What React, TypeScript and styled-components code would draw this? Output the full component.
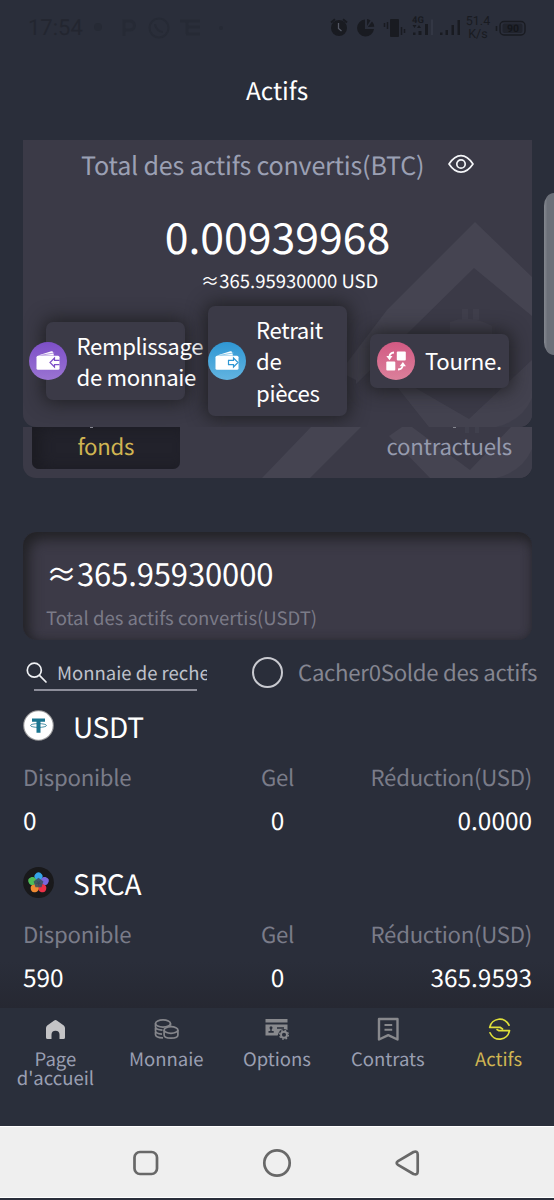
import React from "react";
import styled, { createGlobalStyle } from "styled-components";

const GlobalStyle = createGlobalStyle`
  * { box-sizing: border-box; }
  body {
    margin: 0;
    background: #2a2e3a;
    font-family: "Noto Sans CJK SC", "Noto Sans", sans-serif;
    text-rendering: geometricPrecision;
    color: #fff;
  }
`;

const Page = styled.div`
  position: relative;
  width: 554px;
  height: 1200px;
  overflow: hidden;
  display: flex;
  flex-direction: column;
  background: #2a2e3a;
`;

const StatusBar = styled.div`
  height: 56px;
  flex: none;
  display: flex;
  justify-content: space-between;
  padding: 0 28px 0 28px;
  font-family: Roboto, sans-serif;
  color: #191b21;
`;

const StatusLeft = styled.div`
  display: flex;
  align-items: center;
  color: #232630;
  font-size: 22px;
`;

const Clock = styled.span`
  width: 60px;
`;

const StatusRight = styled.div`
  display: flex;
  align-items: center;
`;

const NetSpeed = styled.div`
  width: 28px;
  margin: 1px 3px 0 2px;
  font-size: 12.5px;
  line-height: 12.5px;
  text-align: center;
`;

const Header = styled.header`
  height: 84px;
  flex: none;
  font-size: 24.4px;
  line-height: 69px;
  text-align: center;
`;

const AssetCard = styled.section`
  position: relative;
  width: 509px;
  height: 287px;
  flex: none;
  margin-left: 23px;
  background: #3b3a47;
  border-radius: 0 0 13px 13px;
  overflow: hidden;
`;

const Backdrop = styled.svg`
  position: absolute;
  right: 0;
  bottom: 0;
`;

const CardTitle = styled.div`
  position: relative;
  display: flex;
  align-items: center;
  height: 47px;
  padding-left: 58px;
  gap: 24px;
  font-size: 25.1px;
  letter-spacing: -0.2px;
  color: #9ba0b4;
  white-space: nowrap;
`;

const CardTitleText = styled.span`
  line-height: 47px;
  padding-top: 4px;
`;

const BtcTotal = styled.div`
  position: relative;
  margin-top: 19px;
  font-size: 42.8px;
  line-height: 60px;
  text-align: center;
`;

const UsdTotal = styled.div`
  position: relative;
  margin-top: 1px;
  padding-left: 24px;
  font-size: 18.5px;
  line-height: 28px;
  text-align: center;
`;

const Actions = styled.div`
  position: relative;
  display: flex;
  align-items: center;
  gap: 23px;
  height: 110px;
  margin-top: 11px;
  padding-left: 23px;
`;

const Action = styled.button`
  display: flex;
  flex: none;
  align-items: center;
  justify-content: center;
  gap: 10px;
  width: 139px;
  padding: 8px 0;
  border: 0;
  border-radius: 7px;
  background: #3b3a47;
  box-shadow: 0 0 18px 3px rgba(28, 28, 30, 0.85);
  color: #fff;
  font: inherit;
`;

const ActionLabel = styled.span<{ $width: number }>`
  flex: none;
  width: ${(p) => p.$width}px;
  font-size: 22.2px;
  letter-spacing: -0.35px;
  line-height: 31.2px;
  text-align: left;
  white-space: pre;
`;

const ActionIcon = styled.svg`
  flex: none;
  display: block;
`;

const Tabs = styled.div`
  position: relative;
  display: flex;
  justify-content: space-between;
  width: 509px;
  height: 51px;
  flex: none;
  margin-left: 23px;
  padding: 0 9px;
  background: #3b3a47;
  border-radius: 0 0 13px 13px;
  overflow: hidden;
`;

const Tab = styled.div<{ $active?: boolean }>`
  position: relative;
  width: 147.5px;
  height: 41.5px;
  border-radius: 0 0 7px 7px;
  font-size: 22.2px;
  letter-spacing: -0.27px;
  line-height: 38px;
  text-align: center;
  color: ${(p) => (p.$active ? "#d0b552" : "#969bae")};
  background: ${(p) => (p.$active ? "#22222b" : "transparent")};
  box-shadow: ${(p) => (p.$active ? "inset 8px 0 14px rgba(26, 26, 32, 0.8)" : "none")};
`;

const BalanceCard = styled.section`
  width: 509px;
  height: 108px;
  flex: none;
  margin: 54px 0 0 23px;
  padding: 15px 0 0 23px;
  border-radius: 14px;
  background: #3c3a47;
  box-shadow: inset 5px 6px 13px 1px #222226, inset -2px -1px 6px rgba(46, 46, 56, 0.6);
`;

const BalanceValue = styled.div`
  font-size: 31px;
  letter-spacing: -0.12px;
  line-height: 51px;
`;

const BalanceLabel = styled.div`
  margin-top: 5px;
  font-size: 18.5px;
  line-height: 30px;
  color: #7b7b88;
`;

const Filters = styled.div`
  display: flex;
  height: 60px;
  flex: none;
  padding-left: 26px;
  white-space: nowrap;
`;

const Search = styled.div`
  width: 181px;
`;

const SearchRow = styled.div`
  display: flex;
  align-items: center;
  height: 49px;
  padding-top: 16px;
  gap: 9px;
`;

const SearchText = styled.div`
  width: 150px;
  overflow: hidden;
  font-size: 18.5px;
  line-height: 30px;
  margin-top: 1px;
  color: #bfc2cc;
`;

const Underline = styled.div`
  width: 163px;
  height: 2px;
  margin-left: 8px;
  background: #8d8e9a;
`;

const HideToggle = styled.div`
  display: flex;
  align-items: center;
  height: 64px;
  margin-left: 45px;
  gap: 15px;
  color: #858691;
`;

const Radio = styled.span`
  width: 31px;
  height: 31px;
  border: 2px solid #c9cad0;
  border-radius: 50%;
`;

const HideLabel = styled.span`
  font-size: 22.2px;
  letter-spacing: -0.28px;
  line-height: 30px;
`;

const AssetList = styled.main`
  height: 308px;
  flex: none;
  overflow: hidden;
  padding: 0 22px 0 23px;
  background: linear-gradient(#2a2e3a 85%, #262832);
`;

const Asset = styled.article`
  height: 157px;
`;

const AssetHead = styled.div`
  display: flex;
  align-items: center;
  height: 51px;
  gap: 19px;
  font-size: 28px;
  letter-spacing: -0.3px;
`;

const AssetName = styled.span`
  line-height: 48px;
  margin-top: 2px;
`;

const Columns = styled.div<{ $kind: "label" | "value" }>`
  display: grid;
  grid-template-columns: 1fr 1fr 1fr;
  font-size: ${(p) => (p.$kind === "label" ? 22.2 : 24.4)}px;
  letter-spacing: ${(p) => (p.$kind === "label" ? -0.26 : 0)}px;
  line-height: ${(p) => (p.$kind === "label" ? 53 : 33)}px;
  color: ${(p) => (p.$kind === "label" ? "#7a7c89" : "#fff")};
  white-space: nowrap;
  & > :nth-child(2) { text-align: center; }
  & > :nth-child(3) { text-align: right; }
`;

const BottomNav = styled.nav`
  display: grid;
  grid-template-columns: repeat(5, 1fr);
  height: 118px;
  flex: none;
  background: #2a2f3b;
`;

const NavItem = styled.div<{ $active?: boolean }>`
  display: flex;
  flex-direction: column;
  align-items: center;
  padding-top: 8px;
  font-size: 18.5px;
  line-height: 18.5px;
  text-align: center;
  white-space: pre;
  color: ${(p) => (p.$active ? "#d0b552" : "#9a9fb2")};
`;

const NavIcon = styled.svg`
  display: block;
  margin-bottom: 7px;
`;

const SystemBar = styled.div`
  height: 72px;
  flex: none;
  border-top: 1px solid #fff;
  background: #efefef;
  border-bottom: 1px solid #fff;
  display: flex;
  justify-content: center;
`;

const EdgeHandle = styled.div`
  position: absolute;
  right: 0;
  top: 193px;
  width: 10px;
  height: 162px;
  border-radius: 14px 0 0 14px / 18px 0 0 18px;
  background: linear-gradient(90deg, #858890, #6c7079 35%);
`;

const TabRemnant = styled.i<{ $left: number }>`
  position: absolute;
  left: ${(p) => p.$left}px;
  top: 0;
  width: 3px;
  height: 1px;
  background: #85868f;
`;

const LeftStatusIcons = () => (
  <svg width="140" height="24" viewBox="88 16 140 24" fill="none" stroke="#262a35" strokeWidth="2">
    <circle cx="98" cy="27" r="4" fill="#262a35" stroke="none" />
    <path d="M124 36V21h6a4.500 4.500 0 0 1 0 9h-6" strokeWidth="3" />
    <circle cx="159" cy="28" r="9.500" />
    <path d="M155 24c0 4 4 8 8 8" />
    <path d="M180 21h20M186 27h14M186 34h14M187 21v13" strokeWidth="3" />
    <circle cx="221" cy="28" r="2" fill="#262a35" stroke="none" />
  </svg>
);

const RightStatusIcons = () => (
  <svg width="134" height="28" viewBox="328 14 134 28" fill="#191b21">
    <circle cx="339" cy="28" r="8" />
    <path d="M331 22.500l4-3.300M347 22.500l-4-3.300" stroke="#191b21" strokeWidth="2" />
    <path d="M338.500 23v5.500l3 2.500" stroke="#555965" strokeWidth="1.300" fill="none" />
    <path d="M365 19.500a8.500 8.500 0 1 0 9 9.500h-9z" />
    <path d="M367 19a8 8 0 0 1 3.500 1.500L367 26zM372 21.500a8 8 0 0 1 2.300 5.200l-6.500.3z" />
    <rect x="390" y="19" width="9" height="18" rx="1" />
    <path d="M384.500 23v4M387.500 22v7M401.500 27v8M404.500 29v4" stroke="#191b21" strokeWidth="1.500" />
    <text x="412" y="23" fontSize="9.500" fontWeight="700" fontFamily="Roboto">4G</text>
    <path d="M412.500 25h4l-2 3zM417 28l2-3 2 3z" />
    <path d="M413 32.500h2.500V35H413zM418.500 31h3v4h-3zM425 24h3v11h-3z" />
    <path d="M431 19.500h2V35h-2z" fill="#333744" />
    <path d="M440 32.500h2.500V35H440zM445.500 30h2.500v5h-2.500zM451.500 25h2.500v10h-2.500zM457.500 20h2.500v15h-2.500z" />
  </svg>
);

const Battery = () => (
  <svg width="31" height="20" viewBox="495 17 31 20">
    <rect x="500" y="20.500" width="25" height="13.500" rx="4" fill="none" stroke="#191b21" strokeWidth="1.400" />
    <rect x="502.500" y="22.500" width="20" height="9.500" rx="2" fill="#20232c" />
    <path d="M496.500 25v5" stroke="#191b21" strokeWidth="1.600" />
    <text x="513" y="31.300" fontSize="10.500" fontWeight="700" textAnchor="middle" fontFamily="Roboto" fill="#14161b">90</text>
  </svg>
);

const Eye = () => (
  <svg width="26" height="20" viewBox="0 0 26 20" fill="none" stroke="#f4f5f8" strokeWidth="1.700">
    <path d="M1 10C5 4 9 1.600 13 1.600S21 4 25 10c-4 6-8 8.200-12 8.200S5 16 1 10z" strokeLinejoin="round" />
    <circle cx="13" cy="10" r="4.200" />
  </svg>
);

const Wallet = ({ id, from, to, out }: { id: string; from: string; to: string; out?: boolean }) => (
  <ActionIcon width="38" height="38" viewBox="0 0 38 38">
    <defs>
      <linearGradient id={id} x1="0" y1="0" x2="0" y2="1">
        <stop offset="0" stopColor={from} />
        <stop offset="1" stopColor={to} />
      </linearGradient>
    </defs>
    <circle cx="19" cy="19" r="19" fill={`url(#${id})`} />
    <path d="M9 13.500L22.300 9.200q1.500-.3 2 1.200l.6 3.100z" fill="#fff" />
    <path d="M12.500 13.200l13.500-2.400" stroke={to} strokeWidth=".7" />
    <rect x="7.500" y="13.800" width="23" height="14" rx="1.500" fill="#fff" />
    {out ? (
      <path d="M20.500 18.300h5v-2.300l4.500 4.500-4.500 4.500v-2.300h-5z" fill="none" stroke={from} strokeWidth="1.200" />
    ) : (
      <path d="M30.500 18.300h-5v-2.300L21 20.500l4.500 4.500v-2.300h5" fill="none" stroke={from} strokeWidth="1.200" />
    )}
  </ActionIcon>
);

const Swap = () => (
  <ActionIcon width="38" height="38" viewBox="0 0 38 38">
    <defs>
      <linearGradient id="swap" x1="0" y1="0" x2="0" y2="1">
        <stop offset="0" stopColor="#d25a83" />
        <stop offset="1" stopColor="#db809b" />
      </linearGradient>
    </defs>
    <circle cx="19" cy="19" r="19" fill="url(#swap)" />
    <rect x="19.800" y="9.600" width="9" height="9" rx="1" fill="#fff" />
    <rect x="9.300" y="19.600" width="9" height="9" rx="1" fill="#fff" />
    <path d="M17 10.500q-4.300.2-4.600 4.500" fill="none" stroke="#fff" strokeWidth="1.800" />
    <path d="M9.300 14h6.200l-3 4.200z" fill="#fff" />
    <path d="M21 27.500q4.500-.2 4.800-4.500" fill="none" stroke="#fff" strokeWidth="1.800" />
    <path d="M22.700 24.300h6.200l-3-4.300z" fill="#fff" />
  </ActionIcon>
);

const CardBackdrop = () => (
  <Backdrop width="300" height="287" viewBox="232 140 300 287">
    <g fill="#454451">
      <path d="M475 222L532 277V316L474 268L356 384V380L340 372L387 310z" />
      <path d="M398 388L412 386L469 419L532 360V427H429z" opacity=".85" />
    </g>
    <path d="M462 309h6v11h-6zM473 309h6v11h-6zM450 322q20-8 42 4v12h-42z" fill="#454451" opacity=".55" />
    <path d="M532 398v29h-36q26-6 36-29z" fill="#3b3a47" opacity=".6" />
  </Backdrop>
);

const TabsBackdrop = () => (
  <Backdrop width="300" height="51" viewBox="232 427 300 51">
    <path d="M311 427H361L310 478H262zM389 436L402 427H412L470 470L511 427H532V478H430z" fill="#454451" />
    <path d="M465 427h4v6h-4zM475 427h4v6h-4z" fill="#454451" opacity=".6" />
    <path d="M532 449v29h-36q26-6 36-29z" fill="#3b3a47" opacity=".6" />
  </Backdrop>
);

const SearchIcon = () => (
  <svg width="22" height="22" viewBox="0 0 22 22" fill="none" stroke="#f0f1f4" strokeWidth="1.700" strokeLinecap="round">
    <circle cx="8.300" cy="8.200" r="7" />
    <path d="M13.500 13.300l6.500 6.700" />
  </svg>
);

const Tether = () => (
  <svg width="31" height="31" viewBox="0 0 31 31">
    <circle cx="15.500" cy="15.500" r="15.300" fill="#9b9b9d" />
    <circle cx="15.500" cy="15.500" r="14.200" fill="#fff" />
    <path d="M9 8.500h13v3.300h-4.500v11h-4v-11H9z" fill="#1a7590" />
    <ellipse cx="15.500" cy="15.500" rx="8" ry="1.900" fill="none" stroke="#1a7590" strokeWidth=".8" />
  </svg>
);

const petals = ["#35a5ea", "#7a68dc", "#ed3148", "#f08b33", "#4fbd58"];

const Srca = () => (
  <svg width="31" height="31" viewBox="0 0 31 31">
    <circle cx="15.500" cy="15.500" r="15.400" fill="#19191b" />
    {petals.map((color, i) => (
      <path
        key={color}
        d="M15.500 15C11 11.500 10.700 9.500 12 7.500q3.500-4.600 7 0C20.300 9.500 20 11.500 15.500 15z"
        fill={color}
        transform={`rotate(${i * 72} 15.500 16)`}
      />
    ))}
    <path d="M15.500 10.800l4.900 3.600-1.900 5.800h-6l-1.900-5.800z" fill="#3f5260" opacity=".9" />
  </svg>
);

const HomeIcon = () => (
  <NavIcon width="27" height="27" viewBox="0 0 27 27">
    <path d="M12.200 4.400q1.300-.9 2.600 0l7 5.200q1.200 1 1.200 2.500v9.300q0 1.600-1.600 1.600h-3.900v-4.200a4 4 0 0 0-8 0V23H5.600Q4 23 4 21.400v-9.300q0-1.500 1.200-2.500z" fill="#c4c4c6" />
  </NavIcon>
);

const CoinsIcon = () => (
  <NavIcon width="27" height="27" viewBox="0 0 27 27" fill="none" stroke="#85868b" strokeWidth="1.700">
    <ellipse cx="10" cy="7.500" rx="7.500" ry="3.600" />
    <path d="M2.500 7.500v3.300c0 1.900 3 3.200 7 3.400M17.500 7.500v2.300M2.500 11.800v3c0 1.800 2.500 3 6.500 3.300M2.500 15.800v2.700c0 1.900 3 3.300 7.500 3.300" />
    <ellipse cx="18" cy="14" rx="6.900" ry="3.300" />
    <path d="M11.100 14v5c0 1.800 3 3.200 6.900 3.200s6.900-1.400 6.900-3.200v-5" />
  </NavIcon>
);

const OptionsIcon = () => (
  <NavIcon width="27" height="27" viewBox="0 0 27 27">
    <path d="M2.500 3h22v3.500h-22zM2.500 8.500h22V14h-6l-4 5.500h-12z" fill="#88898d" />
    <circle cx="8" cy="11.700" r="1.500" fill="#2a2f3b" />
    <path d="M7.300 12h1.400v3h2v1.800H5.500V15h1.800zM14 11.300h7v1.400h-7z" fill="#2a2f3b" />
    <circle cx="21" cy="18.800" r="5.800" fill="#2a2f3b" />
    <circle cx="21" cy="18.800" r="3" fill="none" stroke="#88898d" strokeWidth="1.900" />
    <circle cx="21" cy="18.800" r="4.400" fill="none" stroke="#88898d" strokeWidth="1.300" strokeDasharray="1.700 1.755" />
  </NavIcon>
);

const ContractsIcon = () => (
  <NavIcon width="27" height="27" viewBox="0 0 27 27" fill="none" stroke="#88898d" strokeWidth="2.400">
    <path d="M5 3h18.500v20.500l-9.250-4.300L5 23.500z" strokeLinejoin="round" />
    <path d="M10.500 9h7.700M10.500 13.800h7.700" strokeWidth="2" />
  </NavIcon>
);

const AssetsIcon = () => (
  <NavIcon width="27" height="27" viewBox="0 0 27 27" fill="none" stroke="#dfe03a" strokeWidth="1.700" strokeLinecap="round" strokeLinejoin="round">
    <path d="M24 9.200A10.200 10.200 0 0 0 4.700 11.300H15L17.500 13" />
    <path d="M5 16.800A10.200 10.200 0 0 0 24.500 14.700H14L12 13.600" />
  </NavIcon>
);

const SystemIcons = () => (
  <svg width="300" height="70" viewBox="127 1127 300 70" fill="none" stroke="#686868" strokeWidth="2.700">
    <rect x="134.500" y="1152" width="22.500" height="22" rx="5.500" />
    <circle cx="277" cy="1163" r="12.700" />
    <path d="M413.500 1152L398 1161.200q-2.700 1.800 0 3.600L413.500 1174q4.200 1.500 4.200-2.500v-17q0-4-4.200-2.500z" strokeLinejoin="round" />
  </svg>
);

const assets = [
  { name: "USDT", icon: <Tether />, available: "0", frozen: "0", usd: "0.0000" },
  { name: "SRCA", icon: <Srca />, available: "590", frozen: "0", usd: "365.9593" },
];

const navItems = [
  { label: "Page\nd'accueil", icon: <HomeIcon /> },
  { label: "Monnaie", icon: <CoinsIcon /> },
  { label: "Options", icon: <OptionsIcon /> },
  { label: "Contrats", icon: <ContractsIcon /> },
  { label: "Actifs", icon: <AssetsIcon />, active: true },
];

export default function App() {
  return (
    <Page>
      <GlobalStyle />
      <StatusBar>
        <StatusLeft>
          <Clock>17:54</Clock>
          <LeftStatusIcons />
        </StatusLeft>
        <StatusRight>
          <RightStatusIcons />
          <NetSpeed>51.4 K/s</NetSpeed>
          <Battery />
        </StatusRight>
      </StatusBar>
      <Header>Actifs</Header>
      <AssetCard>
        <CardBackdrop />
        <CardTitle>
          <CardTitleText>Total des actifs convertis(BTC)</CardTitleText>
          <Eye />
        </CardTitle>
        <BtcTotal>0.00939968</BtcTotal>
        <UsdTotal>≈365.95930000 USD</UsdTotal>
        <Actions>
          <Action>
            <Wallet id="deposit" from="#7d4fc8" to="#9a74d2" />
            <ActionLabel $width={126}>{"Remplissage\nde monnaie"}</ActionLabel>
          </Action>
          <Action>
            <Wallet id="withdraw" from="#2f97d4" to="#62b4e0" out />
            <ActionLabel $width={91}>{"Retrait\nde\npièces"}</ActionLabel>
          </Action>
          <Action>
            <Swap />
            <ActionLabel $width={77}>Tourne.</ActionLabel>
          </Action>
        </Actions>
      </AssetCard>
      <Tabs>
        <TabsBackdrop />
        <Tab $active>
          <TabRemnant $left={58} />
          fonds
        </Tab>
        <Tab>
          <TabRemnant $left={77} />
          contractuels
        </Tab>
      </Tabs>
      <BalanceCard>
        <BalanceValue>≈365.95930000</BalanceValue>
        <BalanceLabel>Total des actifs convertis(USDT)</BalanceLabel>
      </BalanceCard>
      <Filters>
        <Search>
          <SearchRow>
            <SearchIcon />
            <SearchText>Monnaie de recherche</SearchText>
          </SearchRow>
          <Underline />
        </Search>
        <HideToggle>
          <Radio />
          <HideLabel>Cacher0Solde des actifs</HideLabel>
        </HideToggle>
      </Filters>
      <AssetList>
        {assets.map((a) => (
          <Asset key={a.name}>
            <AssetHead>
              {a.icon}
              <AssetName>{a.name}</AssetName>
            </AssetHead>
            <Columns $kind="label">
              <span>Disponible</span>
              <span>Gel</span>
              <span>Réduction(USD)</span>
            </Columns>
            <Columns $kind="value">
              <span>{a.available}</span>
              <span>{a.frozen}</span>
              <span>{a.usd}</span>
            </Columns>
          </Asset>
        ))}
      </AssetList>
      <BottomNav>
        {navItems.map((n) => (
          <NavItem key={n.label} $active={n.active}>
            {n.icon}
            {n.label}
          </NavItem>
        ))}
      </BottomNav>
      <SystemBar>
        <SystemIcons />
      </SystemBar>
      <EdgeHandle />
    </Page>
  );
}
